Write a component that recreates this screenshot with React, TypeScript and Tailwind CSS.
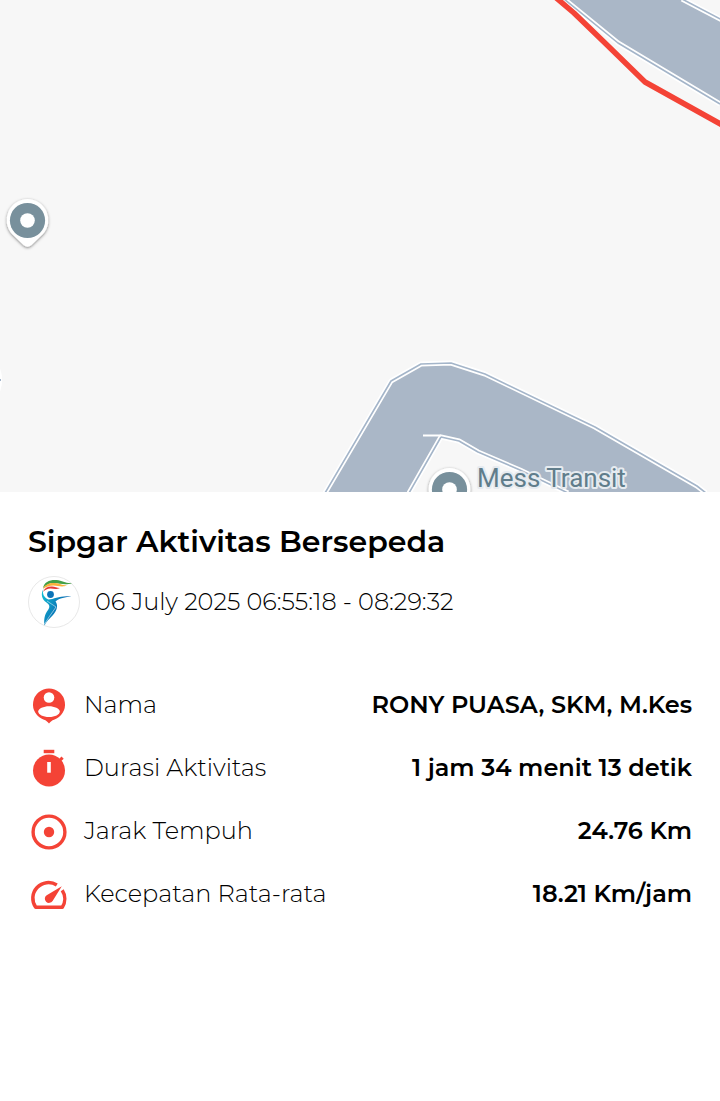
import type { ReactNode } from 'react';

type StatRowProps = {
  icon: ReactNode;
  label: string;
  value: string;
};

function PersonIcon() {
  return (
    <svg viewBox="0 0 42 42" className="size-[42px] flex-none" fill="#f44336" aria-hidden="true">
      <path d="M21 3.500a16 16 0 0 0-5 31.200c2 .6 3.500 2 5 3.800 1.500-1.800 3-3.200 5-3.800A16 16 0 0 0 21 3.500Z" />
      <circle cx="21" cy="12.500" r="5.300" fill="#fff" />
      <path d="M10.200 26.500c0-3 5.500-5.300 10.800-5.300s10.800 2.300 10.800 5.300S27 32 21 32s-10.800-2.500-10.800-5.500Z" fill="#fff" />
    </svg>
  );
}

function TimerIcon() {
  return (
    <svg viewBox="0 0 42 42" className="size-[42px] flex-none" fill="#f44336" aria-hidden="true">
      <rect x="15.700" y="1.800" width="10.600" height="3.400" />
      <circle cx="21" cy="22.500" r="16" />
      <path d="m30 12 3.500-3.500 2.200 2.200L32.200 14Z" />
      <rect x="19.200" y="14" width="3.600" height="10.700" fill="#fff" />
    </svg>
  );
}

function TargetIcon() {
  return (
    <svg viewBox="0 0 42 42" className="size-[42px] flex-none" aria-hidden="true">
      <circle cx="21" cy="21" r="15.900" fill="none" stroke="#f44336" strokeWidth="3.400" />
      <circle cx="21" cy="21" r="5.200" fill="#f44336" />
    </svg>
  );
}

function SpeedIcon() {
  return (
    <svg viewBox="0 0 42 42" className="size-[42px] flex-none" aria-hidden="true">
      <path
        d="M28.800 10.900A15.700 15.700 0 0 0 7.700 33.300H34.300A15.700 15.700 0 0 0 34.200 16.300"
        fill="none"
        stroke="#f44336"
        strokeWidth="3.500"
        strokeLinejoin="round"
      />
      <path d="M33.800 12.200 24.600 26.900a4.200 4.200 0 1 1-5.900-5.700Z" fill="#f44336" />
    </svg>
  );
}

function ClubLogo() {
  return (
    <svg viewBox="0 0 52 52" className="size-[52px] flex-none" role="img" aria-label="Sipgar">
      <defs>
        <linearGradient id="body" x1="0" y1="0" x2="1" y2="0.6">
          <stop offset="0" stopColor="#12c4d6" />
          <stop offset="0.7" stopColor="#0b6fb4" />
        </linearGradient>
      </defs>
      <circle cx="26" cy="26" r="25.500" fill="#fff" stroke="#e8e8e8" />
      <path d="M15 12c1-6 7-8.500 13.500-8 6 .5 9 3.500 15.500 3-7 3-12 0-18 0-5 0-8 2-11 5Z" fill="#43a047" />
      <path d="M15 13c2-5 7-6.500 12-6 5 .4 7 2.500 12 2.300-5 2.500-9 .2-13.500.2-4 0-7.500 1.200-10.500 3.500Z" fill="#fbb03b" />
      <path d="M15 16c1.500-4 5-5.800 9-5.500 3 .2 5 1.500 8 1.400-4 1.800-6.500.6-9.500.6-3 0-5.500 1.200-7.500 3.500Z" fill="#e53935" />
      <circle cx="22.500" cy="18.500" r="3.400" fill="#0b74b8" />
      <path d="M15.500 13c-1.500 5 .5 8.500 5 10.500 6-.5 12-4.500 23-3-6 .5-12 1.500-16 5 3 4 1.500 9-2.500 13.500-3.500 4-7 6.500-8.500 10.500-.8-6 0-11 3.500-15.500 2-3 2-5-1.500-7.500-5-3-6-9-3-13.500Z" fill="url(#body)" />
      <path d="m19 25 9 6-7 10-4.500 7" fill="none" stroke="#fff" strokeWidth=".5" />
    </svg>
  );
}

function MapPin({ x, y }: { x: number; y: number }) {
  return (
    <g transform={`translate(${x} ${y})`}>
      <path
        d="M0-21.500a21 21 0 0 0-15.500 35L-4 24.500q4 3.500 8 0L15.500 13.500A21 21 0 0 0 0-21.500Z"
        fill="#fff"
        filter="url(#pin-shadow)"
      />
      <circle r="17.600" fill="#78909c" />
      <circle r="7.300" fill="#fff" />
    </g>
  );
}

function RouteMap() {
  return (
    <svg
      viewBox="0 0 720 492"
      className="block w-full bg-[#f7f7f7]"
      role="img"
      aria-label="Peta rute aktivitas"
    >
      <defs>
        <filter id="pin-shadow" x="-30%" y="-30%" width="160%" height="160%">
          <feDropShadow dx="0" dy="1" stdDeviation="1.500" floodOpacity=".5" />
        </filter>
      </defs>

      {/* roads */}
      <g fill="#aab7c7">
        <path d="M564-1 618 43 720 104V21L680-1Z" />
        <path d="M325 492 391 381 421 364 451 362 485 374 595 427 697 486 706 492H568L520 470 478 452 459 441 441 436 409 492Z" />
      </g>
      <g fill="none" strokeLinejoin="round">
        <g stroke="#fff" strokeWidth="5">
          <path d="M564-1 618 43 720 104" />
          <path d="M682-1 722 20" />
          <path d="M325 493 391 381 421 364 451 363 485 374 595 427 697 486 706 493" />
          <path d="M409 493 441 437 459 441 478 452 520 470 568 493" />
        </g>
        <g stroke="#a4b5c9" strokeWidth="1.600">
          <path d="M564-1 618 43 720 104" />
          <path d="M682-1 722 20" />
          <path d="M325 493 391 381 421 364 451 363 485 374 595 427 697 486 706 493" />
          <path d="M409 493 441 437 459 441 478 452 520 470 568 493" />
        </g>
        <path d="M423 435.500H441" stroke="#fff" strokeWidth="2" />
      </g>

      {/* recorded track */}
      <path d="M554-4 574 13 605 43 645 82 724 126" fill="none" stroke="#f44336" strokeWidth="5.500" strokeLinejoin="round" />

      <ellipse cx="-3" cy="380" rx="5" ry="14" fill="#fff" />
      <path d="M0 380h1" stroke="#a4b5c9" strokeWidth="2" />
      <MapPin x={27.5} y={220.5} />
      <MapPin x={449.5} y={489.5} />
      <text
        x="477"
        y="487"
        fontSize="26"
        fill="#607d8b"
        stroke="#e6ebf0"
        strokeWidth="4"
        strokeLinejoin="round"
        paintOrder="stroke"
        className="font-['Roboto',sans-serif]"
      >
        Mess Transit
      </text>
    </svg>
  );
}

function StatRow({ icon, label, value }: StatRowProps) {
  return (
    <div className="flex items-center">
      {icon}
      <dt className="ml-[14px] flex-1 pb-0.5 font-light">{label}</dt>
      <dd className="pb-0.5 text-right font-semibold">{value}</dd>
    </div>
  );
}

export default function App() {
  return (
    <main className="min-h-screen bg-white font-['Montserrat','Inter',sans-serif] text-black">
      <RouteMap />
      <section className="px-7 pt-[30px] pb-10">
        <h1 className="text-[30px] leading-10 font-semibold">Sipgar Aktivitas Bersepeda</h1>
        <div className="mt-[14px] flex items-center gap-[15px]">
          <ClubLogo />
          <p className="text-[24px] leading-8 font-light">06 July 2025 06:55:18 - 08:29:32</p>
        </div>
        <dl className="mt-[57px] flex flex-col gap-[21px] text-[24px] leading-8">
          <StatRow icon={<PersonIcon />} label="Nama" value="RONY PUASA, SKM, M.Kes" />
          <StatRow icon={<TimerIcon />} label="Durasi Aktivitas" value="1 jam 34 menit 13 detik" />
          <StatRow icon={<TargetIcon />} label="Jarak Tempuh" value="24.76 Km" />
          <StatRow icon={<SpeedIcon />} label="Kecepatan Rata-rata" value="18.21 Km/jam" />
        </dl>
      </section>
    </main>
  );
}
